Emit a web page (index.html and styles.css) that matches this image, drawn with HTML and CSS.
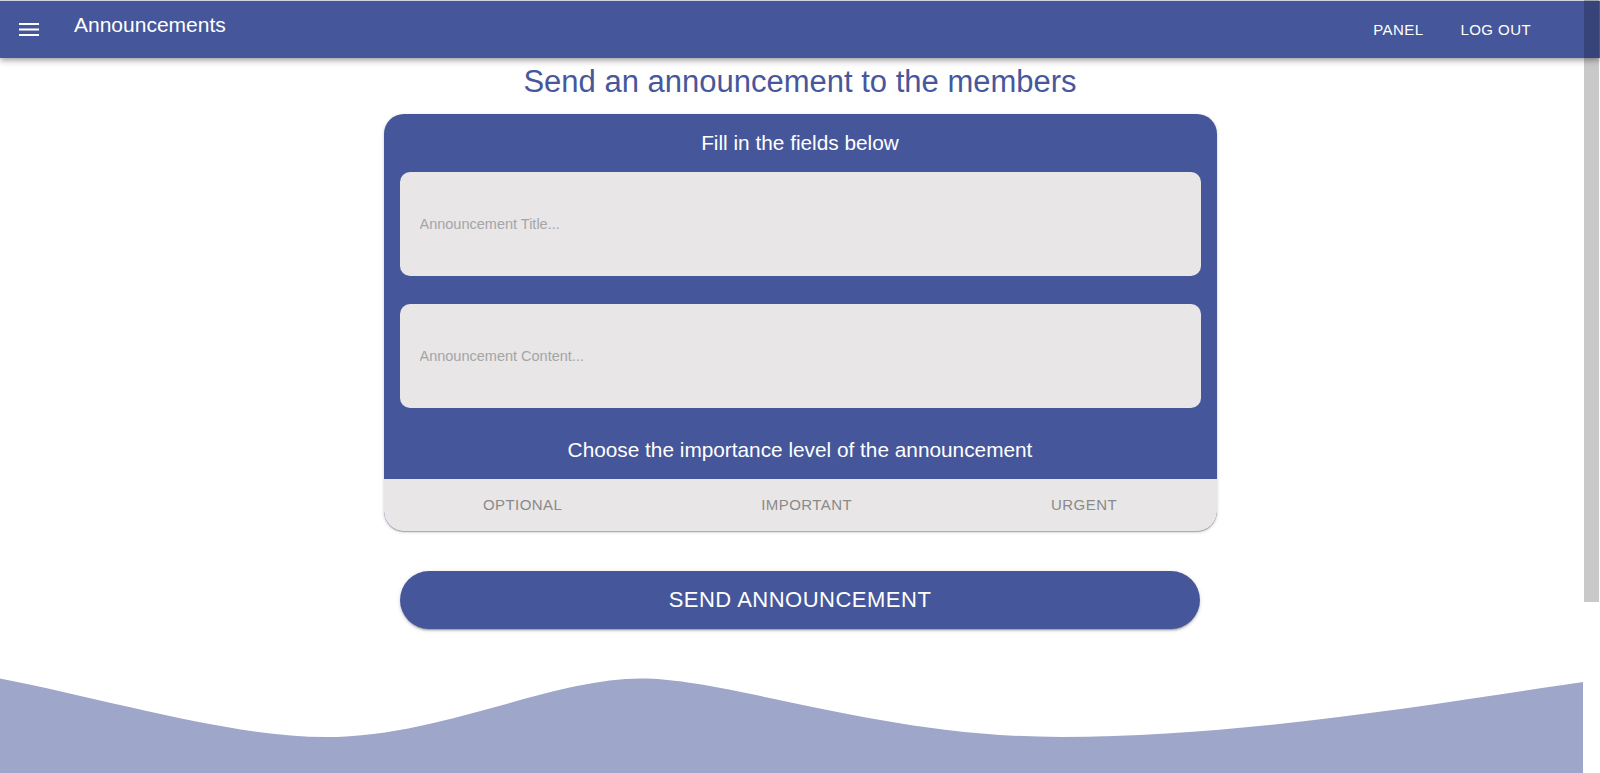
FILE: index.html
```html
<!DOCTYPE html>
<html lang="en">
<head>
<meta charset="utf-8">
<title>Announcements</title>
<link rel="stylesheet" href="styles.css">
</head>
<body>
<header class="appbar">
  <button class="menu-btn" aria-label="menu">
    <svg width="20" height="13" viewBox="0 0 20 13"><rect x="0" y="0" width="20" height="2" fill="#fff"/><rect x="0" y="5.5" width="20" height="2" fill="#fff"/><rect x="0" y="11" width="20" height="2" fill="#fff"/></svg>
  </button>
  <h1 class="appbar-title">Announcements</h1>
  <nav class="appbar-nav">
    <a class="nav-link" href="#">PANEL</a>
    <a class="nav-link" href="#">LOG OUT</a>
  </nav>
</header>
<main class="page">
  <h2 class="page-title">Send an announcement to the members</h2>
  <section class="card">
    <h3 class="card-heading">Fill in the fields below</h3>
    <div class="fields">
      <input class="field" type="text" placeholder="Announcement Title...">
      <input class="field" type="text" placeholder="Announcement Content...">
    </div>
    <h3 class="card-heading importance">Choose the importance level of the announcement</h3>
    <div class="tabs">
      <button class="tab">OPTIONAL</button>
      <button class="tab">IMPORTANT</button>
      <button class="tab">URGENT</button>
    </div>
  </section>
  <button class="send-btn">SEND ANNOUNCEMENT</button>
  <div class="wave">
    <svg width="100%" height="95" viewBox="0 0 1600 95" preserveAspectRatio="none">
      <path d="M0,0.6 C110,22 230,59 326,59 C440,59 550,0.6 641,0.6 C730,0.6 880,59 1061,59 C1250,59 1450,23 1600,1.6 L1600,95 L0,95 Z" fill="#9ea6ca"/>
    </svg>
  </div>
</main>
<div class="scrollbar">
  <div class="thumb"></div>
  <div class="track"></div>
</div>
</body>
</html>
```
FILE: styles.css
```css
* { box-sizing: border-box; }

html, body {
  margin: 0;
  padding: 0;
}

body {
  width: 1600px;
  height: 773px;
  overflow: hidden;
  position: relative;
  display: flex;
  flex-direction: column;
  background: #ffffff;
  font-family: "Liberation Sans", Arial, sans-serif;
}

.appbar {
  position: relative;
  z-index: 2;
  height: 58px;
  flex: none;
  display: flex;
  align-items: flex-start;
  background: #45579a;
  border-top: 1px solid #cfd3e4;
  box-shadow: 0 2px 4px -1px rgba(0,0,0,0.2), 0 4px 5px 0 rgba(0,0,0,0.14), 0 1px 10px 0 rgba(0,0,0,0.12);
  color: #fff;
}

.menu-btn {
  background: none;
  border: 0;
  padding: 0;
  margin: 22px 0 0 19px;
  display: block;
  line-height: 0;
}

.appbar-title {
  margin: 13px 0 0 35px;
  font-size: 21px;
  line-height: 1;
  font-weight: normal;
}

.appbar-nav {
  margin: 21px 0 0 auto;
  padding-right: 69px;
  display: flex;
  gap: 37px;
}

.nav-link {
  color: #fff;
  text-decoration: none;
  font-size: 15px;
  line-height: 1;
  letter-spacing: 0.43px;
}

.page {
  flex: 1;
  display: flex;
  flex-direction: column;
  align-items: center;
  min-height: 0;
}

.page-title {
  margin: 8px 0 0;
  font-size: 31px;
  line-height: 1;
  font-weight: normal;
  color: #46589b;
}

.card {
  width: 833px;
  margin-top: 16.5px;
  background: #45579a;
  border-radius: 20px;
  overflow: hidden;
  box-shadow: 0 2px 1px -1px rgba(0,0,0,0.2), 0 1px 2px 0 rgba(0,0,0,0.14), 0 1px 4px 0 rgba(0,0,0,0.12);
}

.card-heading {
  margin: 0;
  padding: 19px 0 0;
  font-size: 20.8px;
  line-height: 1;
  font-weight: normal;
  text-align: center;
  color: #fff;
}

.card-heading.importance {
  padding: 32px 0 18px;
}

.fields {
  display: flex;
  flex-direction: column;
  gap: 28px;
  padding: 18.5px 16px 0;
}

.field {
  display: block;
  width: 100%;
  height: 104px;
  border: 0;
  outline: none;
  border-radius: 10px;
  background: #e8e6e7;
  padding: 0 20px;
  font-family: "Liberation Sans", Arial, sans-serif;
  font-size: 14.5px;
  color: #333;
}

.field::placeholder {
  color: #a5a5a5;
  opacity: 1;
}

.tabs {
  height: 52px;
  display: flex;
  background: #e8e6e7;
}

.tab {
  flex: 1 1 auto;
  background: none;
  border: 0;
  padding: 0 12px;
  font-family: "Liberation Sans", Arial, sans-serif;
  font-size: 15px;
  letter-spacing: 0.43px;
  color: #8a8a8a;
}

.send-btn {
  width: 800px;
  height: 58px;
  margin-top: 40px;
  border: 0;
  border-radius: 29px;
  background: #45579a;
  color: #fff;
  font-family: "Liberation Sans", Arial, sans-serif;
  font-size: 22px;
  letter-spacing: 0.5px;
  box-shadow: 0 3px 1px -2px rgba(0,0,0,0.2), 0 2px 2px 0 rgba(0,0,0,0.14), 0 1px 5px 0 rgba(0,0,0,0.12);
}

.wave {
  margin-top: auto;
  align-self: stretch;
  height: 95px;
  line-height: 0;
}

.wave svg {
  display: block;
}

.scrollbar {
  position: absolute;
  top: 0;
  right: 0;
  width: 17px;
  height: 773px;
  z-index: 3;
  display: flex;
  flex-direction: column;
}

.thumb {
  height: 602px;
  margin: 0 1px;
  background: rgba(0,0,0,0.21);
}

.track {
  flex: 1;
  background: #ffffff;
}
```
